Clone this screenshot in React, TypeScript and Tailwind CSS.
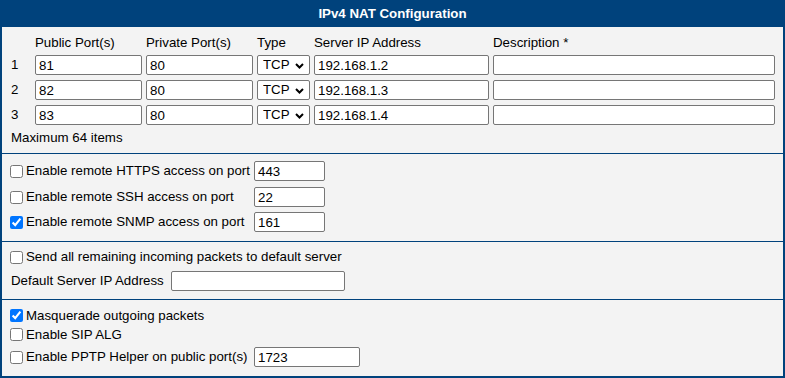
import React from 'react';

const rows = [
  { pub: '81', priv: '80', ip: '192.168.1.2' },
  { pub: '82', priv: '80', ip: '192.168.1.3' },
  { pub: '83', priv: '80', ip: '192.168.1.4' },
];

const inputCls =
  'h-[20px] border border-[#767676] rounded-[2px] bg-white px-[3px] text-[13.3px] leading-[18px] text-black outline-none';

const Field = ({ value, className }: { value?: string; className: string }) => (
  <input type="text" defaultValue={value ?? ''} className={`${inputCls} ${className}`} />
);

const Check = ({ checked }: { checked?: boolean }) => (
  <input
    type="checkbox"
    defaultChecked={checked}
    className="w-[13px] h-[13px] m-0 shrink-0 accent-[#0075ff]"
  />
);

const TypeSelect = () => (
  <div className="relative w-[53px] h-[20px]">
    <select
      defaultValue="TCP"
      className="appearance-none w-full h-full border border-[#767676] rounded-[2px] bg-white pl-[5px] text-[13.3px] leading-[18px] text-black outline-none"
    >
      <option>TCP</option>
      <option>UDP</option>
      <option>TCP/UDP</option>
    </select>
    <svg
      className="absolute right-[6px] top-[8px] pointer-events-none"
      width="9"
      height="6"
      viewBox="0 0 9 6"
    >
      <path d="M1 1 L4.5 4.5 L8 1" fill="none" stroke="#000" strokeWidth="2" />
    </svg>
  </div>
);

export default function App() {
  return (
    <div className="w-[785px] bg-white text-[13.3px] text-black font-['Tahoma','Liberation_Sans',sans-serif]">
      <div className="border-x-2 border-b-2 border-[#00427c] bg-[#f3f3f3]">
        <div className="h-[27px] bg-[#00427c] text-white font-bold flex items-center justify-center">
          IPv4 NAT Configuration
        </div>

        {/* port forwarding table */}
        <div className="pl-[7px] pt-[8px] pb-[7px]">
          <div className="grid grid-cols-[22px_107px_107px_53px_175px_282px] gap-x-[4px] h-[16px] leading-[16px]">
            <span />
            <span>Public Port(s)</span>
            <span>Private Port(s)</span>
            <span>Type</span>
            <span>Server IP Address</span>
            <span>Description *</span>
          </div>
          <div className="flex flex-col gap-[5px] mt-[4px]">
            {rows.map((r, i) => (
              <div
                key={i}
                className="grid grid-cols-[22px_107px_107px_53px_175px_282px] gap-x-[4px] items-center h-[20px]"
              >
                <span className="pl-[2px]">{i + 1}</span>
                <Field value={r.pub} className="w-[107px]" />
                <Field value={r.priv} className="w-[107px]" />
                <TypeSelect />
                <Field value={r.ip} className="w-[175px]" />
                <Field className="w-[282px]" />
              </div>
            ))}
          </div>
          <div className="mt-[5px] h-[16px] leading-[16px] pl-[2px]">Maximum 64 items</div>
        </div>

        {/* remote access */}
        <div className="border-t border-[#00427c] pl-[8px] pt-[7px] pb-[9px]">
          <div className="grid grid-cols-[244px_auto] items-center h-[20px]">
            <label className="flex items-center gap-[3px]">
              <Check />
              <span>Enable remote HTTPS access on port</span>
            </label>
            <Field value="443" className="w-[71px]" />
          </div>
          <div className="grid grid-cols-[244px_auto] items-center h-[20px] mt-[6px]">
            <label className="flex items-center gap-[3px]">
              <Check />
              <span>Enable remote SSH access on port</span>
            </label>
            <Field value="22" className="w-[71px]" />
          </div>
          <div className="grid grid-cols-[244px_auto] items-center h-[20px] mt-[5px]">
            <label className="flex items-center gap-[3px]">
              <Check checked />
              <span>Enable remote SNMP access on port</span>
            </label>
            <Field value="161" className="w-[71px]" />
          </div>
        </div>

        {/* default server */}
        <div className="border-t border-[#00427c] pl-[8px] pt-[5px] pb-[8px]">
          <label className="flex items-center gap-[3px] h-[20px]">
            <Check />
            <span>Send all remaining incoming packets to default server</span>
          </label>
          <div className="flex items-center gap-[7px] h-[20px] mt-[4px]">
            <span className="pl-[1px]">Default Server IP Address</span>
            <Field className="w-[174px]" />
          </div>
        </div>

        {/* misc */}
        <div className="border-t border-[#00427c] pl-[8px] pt-[6px] pb-[9px]">
          <label className="flex items-center gap-[3px] h-[19px]">
            <Check checked />
            <span>Masquerade outgoing packets</span>
          </label>
          <label className="flex items-center gap-[3px] h-[19px]">
            <Check />
            <span>Enable SIP ALG</span>
          </label>
          <div className="grid grid-cols-[244px_auto] items-center h-[20px] mt-[3px]">
            <label className="flex items-center gap-[3px]">
              <Check />
              <span>Enable PPTP Helper on public port(s)</span>
            </label>
            <Field value="1723" className="w-[106px]" />
          </div>
        </div>
      </div>
    </div>
  );
}
